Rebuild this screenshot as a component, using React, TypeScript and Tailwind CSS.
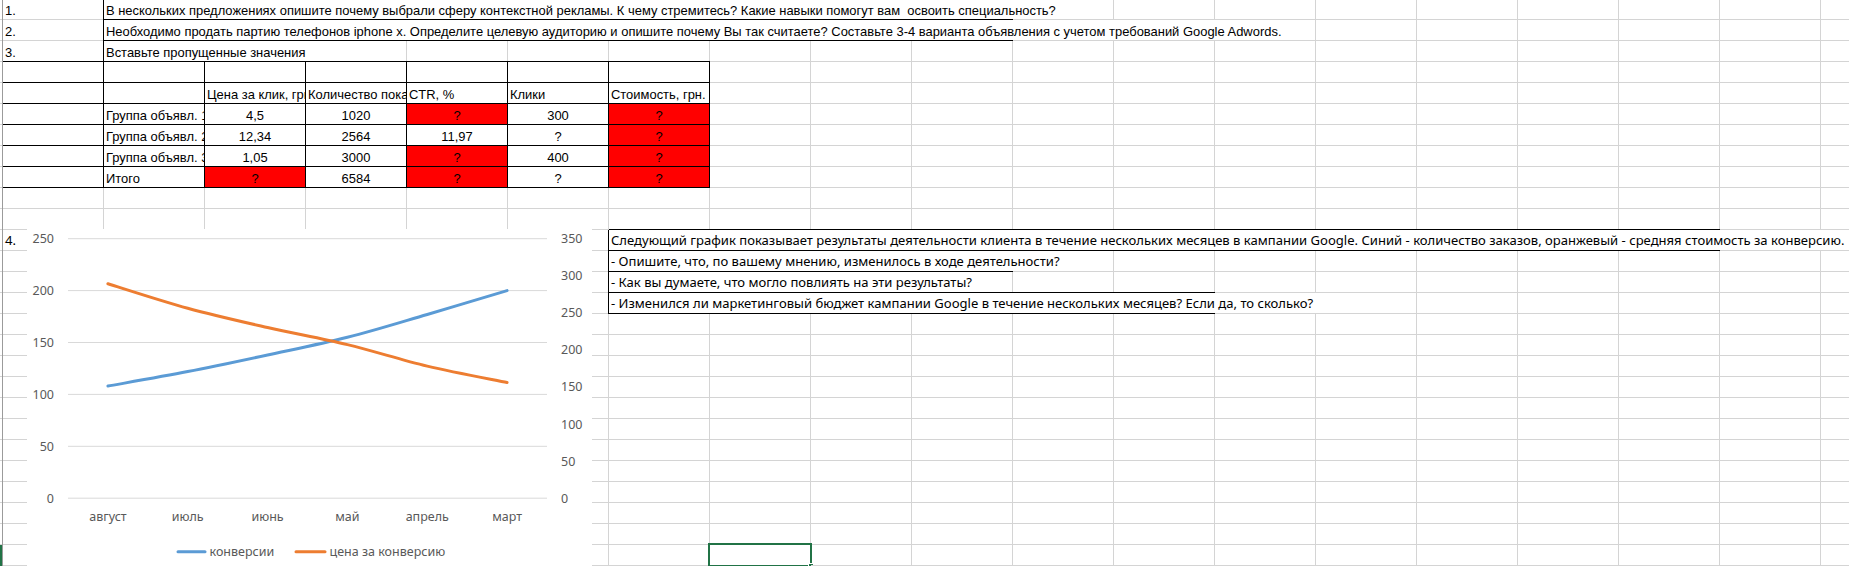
/**
 * Excel sheet: test task on contextual advertising
 * Grid of 101x21 cells, a small table with red blanks, a text box and a line chart
 */

type Border = 'k' | 'g' | 'n';

interface CellSpec {
  text?: string;
  center?: boolean;
  red?: boolean;
  b?: Border;
  r?: Border;
  calibri?: boolean;
  clip?: boolean;
  selected?: boolean;
}

const COLS = 19;
const ROWS = 27;

const sheet: CellSpec[][] = Array.from({ length: ROWS }, () =>
  Array.from({ length: COLS }, () => ({}) as CellSpec),
);

const set = (row: number, col: number, spec: CellSpec) => {
  Object.assign(sheet[row - 1][col - 1], spec);
};
const range = (row: number, from: number, to: number, spec: CellSpec) => {
  for (let c = from; c <= to; c++) set(row, c, spec);
};

// rows 1-3: questions
set(1, 1, { text: '1.', r: 'k' });
set(1, 2, {
  text: 'В нескольких предложениях опишите почему выбрали сферу контекстной рекламы. К чему стремитесь? Какие навыки помогут вам  освоить специальность?',
});
range(1, 2, 10, { b: 'k', r: 'n' });

set(2, 1, { text: '2.', r: 'k' });
set(2, 2, {
  text: 'Необходимо продать партию телефонов iphone x. Определите целевую аудиторию и опишите почему Вы так считаете? Составьте 3-4 варианта объявления с учетом требований Google Adwords.',
});
range(2, 2, 12, { r: 'n' });
range(2, 2, 10, { b: 'k' });

set(3, 1, { text: '3.', r: 'k', b: 'k' });
set(3, 2, { text: 'Вставьте пропущенные значения' });
range(3, 2, 3, { r: 'n' });
range(3, 2, 7, { b: 'k' });

// rows 4-9: table
for (let row = 4; row <= 9; row++) {
  set(row, 1, { r: 'k', b: 'k' });
  range(row, 2, 7, { r: 'k', b: 'k' });
}
const header = ['Цена за клик, грн.', 'Количество показов', 'CTR, %', 'Клики', 'Стоимость, грн.'];
header.forEach((text, i) => set(5, 3 + i, { text, clip: true }));

const body: { name: string; values: (string | null)[] }[] = [
  { name: 'Группа объявл. 1', values: ['4,5', '1020', null, '300', null] },
  { name: 'Группа объявл. 2', values: ['12,34', '2564', '11,97', '?', null] },
  { name: 'Группа объявл. 3', values: ['1,05', '3000', null, '400', null] },
  { name: 'Итого', values: [null, '6584', null, '?', null] },
];
body.forEach((line, i) => {
  set(6 + i, 2, { text: line.name, clip: true });
  line.values.forEach((value, j) =>
    set(6 + i, 3 + j, value === null ? { text: '?', red: true, center: true, clip: true } : { text: value, center: true, clip: true }),
  );
});

// rows 11-15: text box next to the chart
range(11, 7, 17, { b: 'k' });
set(12, 1, { text: '4.', calibri: true });
const notes = [
  'Следующий график показывает результаты деятельности клиента в течение нескольких месяцев в кампании Google. Синий - количество заказов, оранжевый - средняя стоимость за конверсию.',
  '- Опишите, что, по вашему мнению, изменилось в ходе деятельности?',
  '- Как вы думаете, что могло повлиять на эти результаты?',
  '- Изменился ли маркетинговый бюджет кампании Google в течение нескольких месяцев? Если да, то сколько?',
];
notes.forEach((text, i) => {
  set(12 + i, 6, { r: 'k' });
  set(12 + i, 7, { text, calibri: true });
});
range(12, 7, 18, { r: 'n' });
range(12, 7, 17, { b: 'k' });
range(13, 7, 10, { r: 'n', b: 'k' });
range(14, 7, 9, { r: 'n' });
range(14, 7, 12, { b: 'k' });
range(15, 7, 13, { r: 'n' });
range(15, 7, 12, { b: 'k' });

set(27, 8, { selected: true });

const lineColor: Record<Border, string> = {
  k: 'bg-black',
  g: 'bg-[#d4d4d4]',
  n: 'bg-transparent',
};

const Cell = ({ spec }: { spec: CellSpec }) => {
  const b = spec.b ?? 'g';
  const r = spec.r ?? 'g';
  const corner = b === 'k' || r === 'k' ? 'k' : b === 'g' ? 'g' : r;
  const font = spec.calibri
    ? "font-['Noto_Sans',sans-serif] text-[13.05px] pb-[3px]"
    : "font-['Liberation_Sans',Arial,sans-serif] text-[12.95px] pb-px";

  return (
    <div className="relative grid h-[21px] w-[101px] shrink-0 grid-cols-[100px_1px] grid-rows-[20px_1px]">
      <div
        className={`flex min-w-0 items-end px-[2px] leading-none text-black ${font} ${
          spec.center ? 'justify-center' : 'justify-start'
        } ${spec.clip ? 'overflow-hidden' : 'overflow-visible'} ${spec.red ? 'bg-[#ff0000]' : ''}`}
      >
        {spec.text && <span className="whitespace-pre">{spec.text}</span>}
      </div>
      <div className={lineColor[r]} />
      <div className={lineColor[b]} />
      <div className={lineColor[corner]} />

      {spec.selected && (
        <div className="absolute -top-[2px] -left-[2px] -right-px -bottom-px border-2 border-[#217346]">
          <div className="absolute -right-[4px] -bottom-[4px] size-[6px] border border-white bg-[#217346]" />
        </div>
      )}
    </div>
  );
};

// chart geometry, relative to the chart frame
const X0 = 41;
const STEP = 79.83;
const BASE = 269.2;
const leftY = (v: number) => BASE - v * 1.038;
const rightY = (v: number) => BASE - v * 0.742;
const catX = (i: number) => X0 + (i + 0.5) * STEP;

const months = ['август', 'июль', 'июнь', 'май', 'апрель', 'март'];
const conversions = [108, 122, 138, 155, 177, 200];
const costs = [289, 256, 230, 207, 178, 156];

const smooth = (pts: [number, number][]) => {
  let d = `M${pts[0][0]},${pts[0][1]}`;
  for (let i = 0; i < pts.length - 1; i++) {
    const p0 = pts[i - 1] ?? pts[i];
    const p1 = pts[i];
    const p2 = pts[i + 1];
    const p3 = pts[i + 2] ?? p2;
    const c1 = [p1[0] + (p2[0] - p0[0]) / 6, p1[1] + (p2[1] - p0[1]) / 6];
    const c2 = [p2[0] - (p3[0] - p1[0]) / 6, p2[1] - (p3[1] - p1[1]) / 6];
    d += ` C${c1[0]},${c1[1]} ${c2[0]},${c2[1]} ${p2[0]},${p2[1]}`;
  }
  return d;
};

const Chart = () => (
  <div className="absolute left-[27px] top-[229px] h-[337px] w-[565px] bg-white">
    <svg width="565" height="337" className="font-['Noto_Sans',sans-serif] text-[12.5px]">
      {[0, 50, 100, 150, 200, 250].map((v) => (
        <g key={`l-${v}`}>
          <line x1={X0} x2={520} y1={leftY(v)} y2={leftY(v)} stroke="#d9d9d9" strokeWidth="1" />
          <text x={27} y={leftY(v) + 4.5} textAnchor="end" fill="#595959">
            {v}
          </text>
        </g>
      ))}
      {[0, 50, 100, 150, 200, 250, 300, 350].map((v) => (
        <text key={`r-${v}`} x={534} y={rightY(v) + 4.5} fill="#595959">
          {v}
        </text>
      ))}
      {months.map((m, i) => (
        <text key={m} x={catX(i)} y={292} textAnchor="middle" fill="#595959">
          {m}
        </text>
      ))}

      <path
        d={smooth(conversions.map((v, i) => [catX(i), leftY(v)]))}
        fill="none"
        stroke="#5b9bd5"
        strokeWidth="3"
        strokeLinecap="round"
      />
      <path
        d={smooth(costs.map((v, i) => [catX(i), rightY(v)]))}
        fill="none"
        stroke="#ed7d31"
        strokeWidth="3"
        strokeLinecap="round"
      />

      {/* legend */}
      <line x1={151} x2={178} y1={322.7} y2={322.7} stroke="#5b9bd5" strokeWidth="3" strokeLinecap="round" />
      <text x={182.5} y={327} fill="#595959">
        конверсии
      </text>
      <line x1={269} x2={298} y1={322.7} y2={322.7} stroke="#ed7d31" strokeWidth="3" strokeLinecap="round" />
      <text x={302.5} y={327} fill="#595959">
        цена за конверсию
      </text>
    </svg>
  </div>
);

export default function App() {
  return (
    <div className="relative h-[566px] w-[1849px] overflow-hidden bg-white">
      <div className="-mt-px flex flex-col">
        {sheet.map((cells, i) => (
          <div key={`row-${i}`} className="flex h-[21px]">
            {/* row header edge */}
            <div className="grid w-[2px] shrink-0 grid-rows-[20px_1px]">
              <div className={i === ROWS - 1 ? 'bg-[#217346]' : 'bg-white'} />
              <div className={i === ROWS - 1 ? 'bg-[#217346]' : 'bg-[#d4d4d4]'} />
            </div>
            <div className="w-px shrink-0 bg-[#9b9b9b]" />
            {cells.map((spec, j) => (
              <Cell key={`c-${i}-${j}`} spec={spec} />
            ))}
          </div>
        ))}
      </div>
      <Chart />
    </div>
  );
}
